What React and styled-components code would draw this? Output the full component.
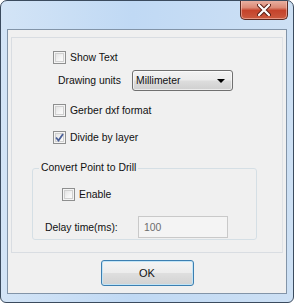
import React from 'react'
import styled, { createGlobalStyle } from 'styled-components'

const Global = createGlobalStyle`
  html, body { margin: 0; padding: 0; background: #ffffff; }
  body { font-family: "Liberation Sans", Arial, sans-serif; font-size: 10.4px; color: #111; }
  * { box-sizing: border-box; }
`

const Window = styled.div`
  width: 294px;
  height: 303px;
  border: 1px solid #3b4b5e;
  border-radius: 7px 7px 6px 6px;
  background: linear-gradient(90deg, #d3e4f6 0%, #c0d9f4 45%, #cde0f4 100%);
  display: flex;
  flex-direction: column;
  overflow: hidden;
`

const TitleBar = styled.div`
  height: 28px;
  flex: none;
  display: flex;
  justify-content: flex-end;
  align-items: flex-start;
  padding-right: 5px;
`

const CloseButton = styled.div`
  width: 48px;
  height: 20px;
  margin-top: -1px;
  border: 1px solid #5b2a22;
  border-top: none;
  border-radius: 0 0 5px 5px;
  background: linear-gradient(180deg, #eab4a6 0%, #dc8a76 40%, #c5432b 55%, #cb5a3f 100%);
  box-shadow: inset 0 0 0 1px rgba(255, 210, 200, 0.5);
  display: flex;
  align-items: center;
  justify-content: center;
`

const Client = styled.div`
  flex: 1;
  margin: 0 6px 8px 6px;
  border: 1px solid #8294a8;
  background: #f0f0f0;
  display: flex;
  flex-direction: column;
  padding: 7px 3px 0 3px;
`

const Panel = styled.div`
  height: 216px;
  border: 1px solid #d9dde2;
  border-right-color: #dfe2e6;
  display: flex;
  flex-direction: column;
  padding-left: 41px;
`

const Row = styled.div`
  display: flex;
  align-items: center;
  height: ${p => p.$h || 19}px;
  margin-top: ${p => p.$top || 0}px;
  margin-left: ${p => p.$indent || 0}px;
`

const Box = styled.span`
  width: 13px;
  height: 13px;
  flex: none;
  border: 1px solid #8e8f8f;
  background: linear-gradient(135deg, #dcdcdc 0%, #f6f6f6 60%, #ffffff 100%);
  box-shadow: inset 0 0 0 1px #f4f4f4, inset 0 0 0 2px #d0d0d0;
  margin-right: 4px;
  display: flex;
  align-items: center;
  justify-content: center;
`

const Label = styled.span`
  width: ${p => (p.$w ? `${p.$w}px` : 'auto')};
  flex: none;
  white-space: nowrap;
`

const Select = styled.div`
  width: 101px;
  height: 21px;
  border: 1px solid #707070;
  border-radius: 3px;
  background: linear-gradient(180deg, #f2f2f2 0%, #ebebeb 48%, #dddddd 52%, #cfcfcf 100%);
  box-shadow: inset 0 0 0 1px rgba(255, 255, 255, 0.6);
  display: flex;
  align-items: center;
  justify-content: space-between;
  padding: 0 7px 0 3px;
`

const Arrow = styled.span`
  width: 0;
  height: 0;
  border-left: 4px solid transparent;
  border-right: 4px solid transparent;
  border-top: 4px solid #000;
  margin-top: 1px;
`

const Group = styled.fieldset`
  width: 225px;
  height: 78px;
  margin: 15px 0 0 -21px;
  padding: 0;
  border: 1px solid #d5dfe5;
  border-radius: 3px;
  display: flex;
  flex-direction: column;
`

const Legend = styled.legend`
  padding: 0 2px;
  margin-left: 6px;
  line-height: 12px;
`

const Field = styled.div`
  width: 90px;
  height: 22px;
  border: 1px solid #c9c9c9;
  background: #f4f4f4;
  color: #6d6d6d;
  display: flex;
  align-items: center;
  padding-left: 5px;
`

const Footer = styled.div`
  flex: 1;
  display: flex;
  justify-content: center;
  padding: 7px 0 0 0;
`

const Button = styled.div`
  width: 93px;
  height: 26px;
  border: 1px solid #3c7fb1;
  border-radius: 3px;
  background: linear-gradient(180deg, #f4f4f4 0%, #ececec 48%, #dedede 52%, #d2d2d2 100%);
  box-shadow: inset 0 0 0 1px #c2e4f6;
  display: flex;
  align-items: center;
  justify-content: center;
  font-size: 11px;
`

const CloseGlyph = () => (
  <svg width="14" height="12" viewBox="0 0 14 12">
    <path d="M2 1 L12 11 M12 1 L2 11" stroke="#5c2118" strokeWidth="4.2" strokeLinecap="round" />
    <path d="M2 1 L12 11 M12 1 L2 11" stroke="#ffffff" strokeWidth="2.2" strokeLinecap="round" />
  </svg>
)

const Check = () => (
  <svg width="9" height="9" viewBox="0 0 9 9">
    <path d="M1 4.5 L3.5 7.5 L8 1" fill="none" stroke="#4a5f97" strokeWidth="1.8" />
  </svg>
)

const CheckBox = ({ label, checked, top, indent }) => (
  <Row $top={top} $indent={indent}>
    <Box>{checked && <Check />}</Box>
    <Label>{label}</Label>
  </Row>
)

const App = () => {
  return (
    <>
      <Global />
      <Window>
        <TitleBar>
          <CloseButton>
            <CloseGlyph />
          </CloseButton>
        </TitleBar>
        <Client>
          <Panel>
            <CheckBox label="Show Text" top={10} />
            <Row $h={23} $top={2} $indent={5}>
              <Label $w={74}>Drawing units</Label>
              <Select>
                <span>Millimeter</span>
                <Arrow />
              </Select>
            </Row>
            <CheckBox label="Gerber dxf format" top={9} />
            <CheckBox label="Divide by layer" checked top={8} />
            <Group>
              <Legend>Convert Point to Drill</Legend>
              <CheckBox label="Enable" top={11} indent={29} />
              <Row $h={22} $top={12} $indent={12}>
                <Label $w={93}>Delay time(ms):</Label>
                <Field>100</Field>
              </Row>
            </Group>
          </Panel>
          <Footer>
            <Button>OK</Button>
          </Footer>
        </Client>
      </Window>
    </>
  )
}

export default App
